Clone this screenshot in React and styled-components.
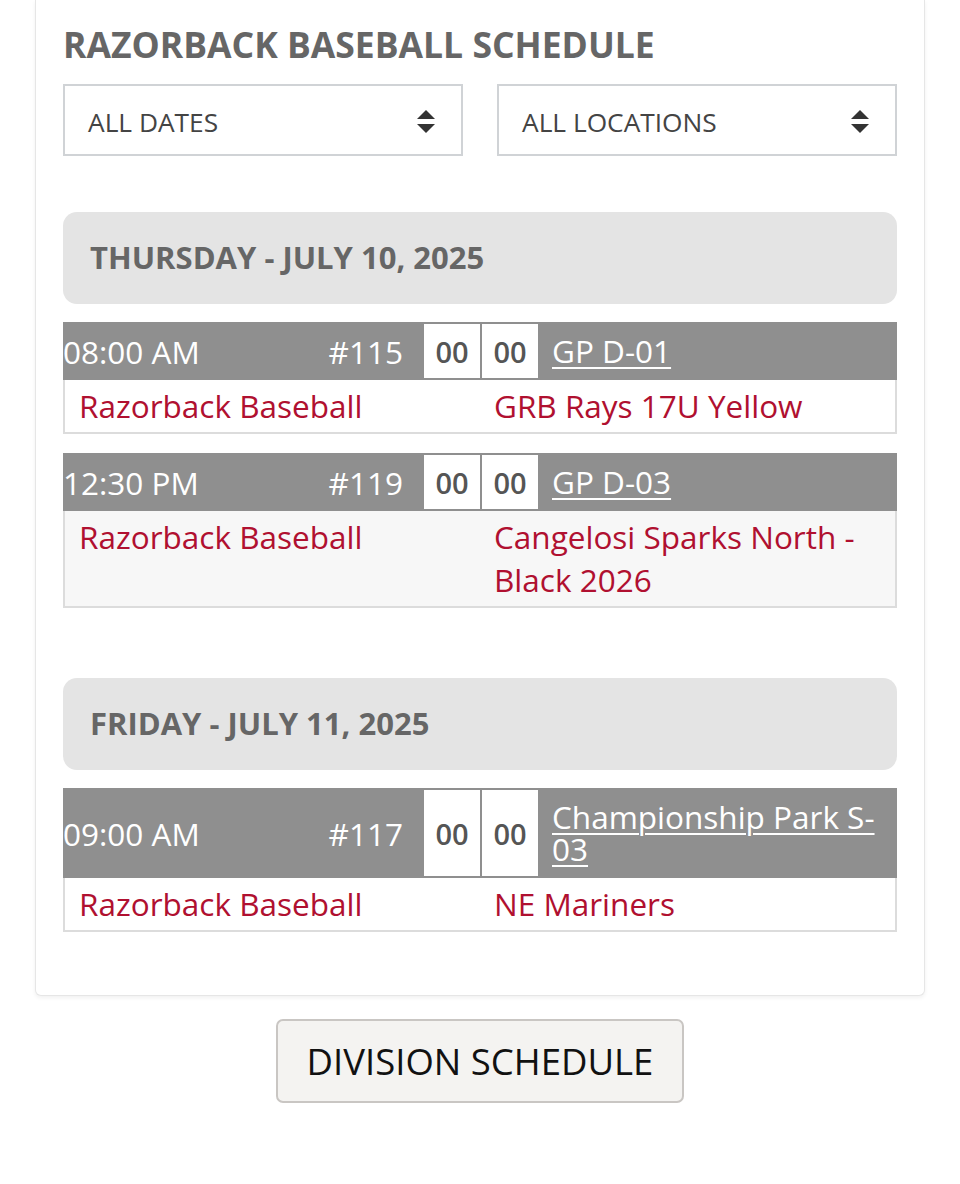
import styled, { createGlobalStyle } from "styled-components";

const GlobalStyle = createGlobalStyle`
  body {
    margin: 0;
    background: #fff;
    font-family: "Open Sans", "Liberation Sans", sans-serif;
  }
  * { box-sizing: border-box; }
`;

const Page = styled.div`
  width: 960px;
  padding: 0 35px 80px;
`;

const Card = styled.div`
  background: #fff;
  border: 1px solid #e6e6e6;
  border-top: none;
  border-radius: 0 0 6px 6px;
  box-shadow: 0 2px 4px rgba(0, 0, 0, 0.06);
  padding: 20px 27px 63px;
`;

const Title = styled.h2`
  margin: 0;
  font-size: 35.5px;
  font-weight: 700;
  color: #666;
  line-height: 48px;
`;

const Filters = styled.div`
  display: grid;
  grid-template-columns: 1fr 1fr;
  gap: 34px;
  margin-top: 16px;
`;

const Select = styled.div`
  height: 72px;
  border: 2px solid #d0d3d6;
  display: flex;
  align-items: center;
  justify-content: space-between;
  padding: 3px 26px 0 23px;
  font-size: 26.3px;
  color: #444;
`;

const DayBlock = styled.div`
  margin-top: ${(p) => p.$top}px;
`;

const DayHeader = styled.div`
  height: 92px;
  background: #e4e4e4;
  border-radius: 14px;
  display: flex;
  align-items: center;
  padding: 0 27px 2px;
  font-size: 31px;
  font-weight: 700;
  color: #666;
  margin-bottom: 18px;
`;

const Game = styled.div`
  & + & {
    margin-top: 19px;
  }
`;

const GameHead = styled.div`
  display: grid;
  grid-template-columns: 1fr 116px 1fr;
  background: #8f8f8f;
  color: #fff;
  font-size: 31.5px;
`;

const TimeCell = styled.div`
  display: flex;
  align-items: center;
  justify-content: space-between;
  padding-right: 19px;
`;

const Scores = styled.div`
  display: flex;
  gap: 2px;
  padding: 2px 0 2px 2px;
`;

const Score = styled.div`
  flex: 1;
  background: #fff;
  color: #555;
  font-weight: 600;
  font-size: 29px;
  display: flex;
  align-items: center;
  justify-content: center;
`;

const Location = styled.a`
  padding: 13px 14px;
  line-height: 32px;
  color: #fff;
  text-decoration: underline;
  text-underline-offset: 4px;
  text-decoration-thickness: 2px;
`;

const GameBody = styled.div`
  display: grid;
  grid-template-columns: 1fr 1fr;
  background: ${(p) => (p.$alt ? "#f7f7f7" : "#fff")};
  border: 2px solid #dcdcdc;
  border-top: none;
`;

const Team = styled.div`
  padding: 4px 14px 5px;
  font-size: 31.5px;
  line-height: 43px;
  color: #b01030;
`;

const ButtonRow = styled.div`
  display: flex;
  justify-content: center;
  margin-top: 23px;
`;

const Button = styled.button`
  width: 408px;
  height: 84px;
  background: #f4f3f1;
  border: 2px solid #c9c6c3;
  border-radius: 7px;
  font-family: "Open Sans", "Liberation Sans", sans-serif;
  font-size: 36.5px;
  font-weight: 500;
  color: #111;
`;

const Arrows = () => (
  <svg width="18" height="24" viewBox="0 0 18 24">
    <path d="M9 0 L18 9 L0 9 Z" fill="#333" />
    <path d="M0 14 L18 14 L9 23 Z" fill="#333" />
  </svg>
);

const days = [
  {
    label: "THURSDAY - JULY 10, 2025",
    top: 56,
    games: [
      { time: "08:00 AM", num: "#115", loc: "GP D-01", home: "Razorback Baseball", away: "GRB Rays 17U Yellow" },
      { time: "12:30 PM", num: "#119", loc: "GP D-03", home: "Razorback Baseball", away: "Cangelosi Sparks North - Black 2026" },
    ],
  },
  {
    label: "FRIDAY - JULY 11, 2025",
    top: 70,
    games: [
      { time: "09:00 AM", num: "#117", loc: "Championship Park S-03", home: "Razorback Baseball", away: "NE Mariners" },
    ],
  },
];

export default function App() {
  return (
    <>
      <GlobalStyle />
      <Page>
        <Card>
          <Title>RAZORBACK BASEBALL SCHEDULE</Title>
          <Filters>
            <Select>
              ALL DATES
              <Arrows />
            </Select>
            <Select>
              ALL LOCATIONS
              <Arrows />
            </Select>
          </Filters>
          {days.map((day) => (
            <DayBlock key={day.label} $top={day.top}>
              <DayHeader>{day.label}</DayHeader>
              {day.games.map((g, i) => (
                <Game key={g.num}>
                  <GameHead>
                    <TimeCell>
                      <span>{g.time}</span>
                      <span>{g.num}</span>
                    </TimeCell>
                    <Scores>
                      <Score>00</Score>
                      <Score>00</Score>
                    </Scores>
                    <Location href="#">{g.loc}</Location>
                  </GameHead>
                  <GameBody $alt={i % 2 === 1}>
                    <Team>{g.home}</Team>
                    <Team>{g.away}</Team>
                  </GameBody>
                </Game>
              ))}
            </DayBlock>
          ))}
        </Card>
        <ButtonRow>
          <Button>DIVISION SCHEDULE</Button>
        </ButtonRow>
      </Page>
    </>
  );
}
